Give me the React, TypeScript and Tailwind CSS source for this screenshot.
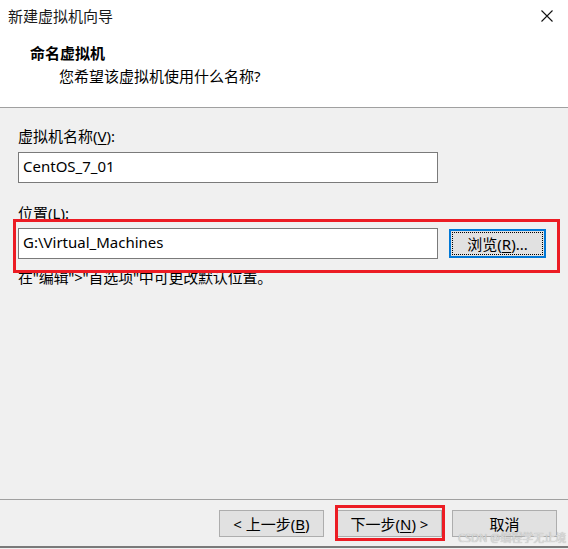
import React from "react";

const FONT = '"Noto Sans", "Noto Sans CJK SC", sans-serif';

function U({ children }: { children: React.ReactNode }) {
  return <span className="underline underline-offset-[2px] decoration-1">{children}</span>;
}

function Btn({ children, className = "" }: { children: React.ReactNode; className?: string }) {
  return (
    <div
      className={`h-[27px] w-[105px] border border-[#adadad] bg-[#e1e1e1] flex items-center justify-center text-[15px] leading-[20px] text-black ${className}`}
    >
      {children}
    </div>
  );
}

export default function App() {
  return (
    <div
      className="w-[568px] h-[549px] bg-[#f0f0f0] flex flex-col overflow-hidden text-black"
      style={{ fontFamily: FONT }}
    >
      {/* header */}
      <div className="h-[107px] bg-white flex flex-col">
        <div className="h-[32px] flex items-center justify-between pl-[8px] pr-[15px]">
          <span className="text-[15px] leading-[20px] text-[#1a1a1a]">新建虚拟机向导</span>
          <svg width="12" height="12" viewBox="0 0 12 12" className="block">
            <path d="M0.5 0.5 L11.5 11.5 M11.5 0.5 L0.5 11.5" stroke="#111" strokeWidth="1.1" fill="none" />
          </svg>
        </div>
        <div className="mt-[11px] pl-[30px] text-[15px] leading-[20px] font-bold">命名虚拟机</div>
        <div className="mt-[3px] pl-[59px] text-[15px] leading-[20px]">您希望该虚拟机使用什么名称?</div>
      </div>
      <div className="h-px bg-[#a0a0a0]" />

      {/* body */}
      <div className="flex-1 relative pl-[18px] pt-[18px] flex flex-col">
        <div className="text-[15px] leading-[20px]">
          虚拟机名称(<U>V</U>):
        </div>
        <div className="mt-[6px] w-[420px] h-[31px] bg-white border border-[#7a7a7a] flex items-center pl-[4px] pb-[4px] text-[15px] leading-[20px]">
          CentOS_7_01
        </div>
        <div className="mt-[20px] text-[15px] leading-[20px]">
          位置(<U>L</U>):
        </div>
        <div className="mt-[5px] flex items-start">
          <div className="w-[420px] h-[31px] bg-white border border-[#7a7a7a] flex items-center pl-[4px] pb-[4px] text-[15px] leading-[20px]">
            G:\Virtual_Machines
          </div>
          <div className="ml-[11px] mt-[1px] w-[97px] h-[29px] bg-[#e1e1e1] border-2 border-[#0078d7] outline-1 outline-dotted outline-black outline-offset-[-4px] flex items-center justify-center text-[15px] leading-[20px]">
            浏览(<U>R</U>)...
          </div>
        </div>
        <div className="mt-[8px] text-[15px] leading-[20px] tracking-[-0.2px]">在"编辑"&gt;"首选项"中可更改默认位置。</div>

        {/* annotation */}
        <div className="absolute left-[13px] top-[111px] w-[547px] h-[54px] border-[3px] border-[#ec1c24]" />
      </div>

      <div className="h-px bg-[#a0a0a0]" />
      {/* footer */}
      <div className="h-[46px] relative flex items-start pt-[10px] pl-[219px]">
        <Btn>
          &lt; 上一步(<U>B</U>)
        </Btn>
        <Btn className="ml-[13px]">
          下一步(<U>N</U>) &gt;
        </Btn>
        <Btn className="ml-[10px]">取消</Btn>

        <div className="absolute left-[335px] top-[5px] w-[110px] h-[36px] border-[3px] border-[#ec1c24]" />
        <div
          className="absolute left-[458px] top-[32px] text-[11px] leading-[12px] text-[#dcdcdc] whitespace-nowrap"
          style={{ textShadow: "0 0 1px #9a9a9a" }}
        >
          CSDN @编程学无止境
        </div>
      </div>
      <div className="h-[2px] bg-[#7a7a7a]" />
      <div className="h-px bg-[#f0f0f0]" />
    </div>
  );
}
